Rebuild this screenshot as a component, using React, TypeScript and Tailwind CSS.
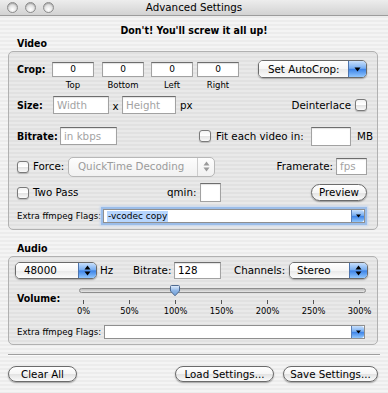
import React from "react";

const BOLD = "font-bold font-['DejaVu_Sans_Condensed','DejaVu_Sans',sans-serif]";

function DownArrow({ color = "#000" }: { color?: string }) {
  return (
    <svg width="7" height="5" viewBox="0 0 7 5">
      <path d="M0.5 0.5 L6.5 0.5 L3.5 4.5 Z" fill={color} />
    </svg>
  );
}

function UpDown({ color = "#000" }: { color?: string }) {
  return (
    <svg width="7" height="11" viewBox="0 0 7 11">
      <path d="M0.5 4.5 L6.5 4.5 L3.5 0.5 Z" fill={color} />
      <path d="M0.5 6.5 L6.5 6.5 L3.5 10.5 Z" fill={color} />
    </svg>
  );
}

function PopUp({ cls, label, stepper, textPad }: { cls: string; label: string; stepper?: boolean; textPad: string }) {
  return (
    <div className={`${cls} flex rounded-[5px] border border-[#6a6a6a] shadow-[0_1px_1.5px_rgba(0,0,0,0.3)] overflow-hidden`}>
      <div className={`flex-1 flex items-center ${textPad} bg-[linear-gradient(180deg,#ffffff_0%,#f6f6f6_50%,#e9e9e9_52%,#fcfcfc_100%)]`}>
        {label}
      </div>
      <div className="w-[18px] flex items-center justify-center border-l border-[#4d74ad] bg-[linear-gradient(180deg,#c9e0fb_0%,#78aef2_45%,#3f85e8_53%,#92c7fd_100%)]">
        {stepper ? <UpDown /> : <DownArrow />}
      </div>
    </div>
  );
}

function Checkbox() {
  return (
    <div className="w-[12px] h-[12px] shrink-0 rounded-[3px] border border-[#7a7a7a] bg-[linear-gradient(180deg,#f2f2f2_0%,#ffffff_45%,#e4e4e4_55%,#fafafa_100%)] shadow-[0_1px_1px_rgba(0,0,0,0.2)]" />
  );
}

function Field({ cls, value, placeholder, center, small }: { cls: string; value?: string; placeholder?: string; center?: boolean; small?: boolean }) {
  return (
    <div
      className={`${cls} shrink-0 bg-white border border-[#a2a2a2] border-t-[#6d6d6d] shadow-[inset_0_1px_1px_rgba(0,0,0,0.12)] flex items-center ${center ? "justify-center" : "pl-[3px]"} ${small ? "text-[9px]" : ""}`}
    >
      {value ? <span>{value}</span> : <span className="text-[#a3a3a3]">{placeholder}</span>}
    </div>
  );
}

function PushButton({ cls, label }: { cls: string; label: string }) {
  return (
    <div className={`${cls} shrink-0 rounded-full border border-[#6b6b6b] flex items-center justify-center bg-[linear-gradient(180deg,#ffffff_0%,#f5f5f5_50%,#e3e3e3_53%,#fafafa_100%)] shadow-[0_1px_1.5px_rgba(0,0,0,0.35)]`}>
      {label}
    </div>
  );
}

function Combo({ focused, value }: { focused?: boolean; value?: string }) {
  return (
    <div className={`flex-1 h-[14px] flex bg-white border border-[#8f8f8f] ${focused ? "shadow-[0_0_0_2px_#9bbde9,0_0_2px_3px_#c3d7f1]" : ""}`}>
      <div className="flex-1 flex items-center pl-[3px]">
        {value ? <span className="bg-[#b6d5fd] px-[1px] text-[9px] leading-[11px]">{value}</span> : null}
      </div>
      <div className="w-[13px] flex items-center justify-center rounded-r-[3px] border-l border-[#5a7fb6] bg-[linear-gradient(180deg,#c9e0fb_0%,#78aef2_45%,#3f85e8_53%,#92c7fd_100%)]">
        <svg width="5" height="4" viewBox="0 0 5 4">
          <path d="M0 0.5 L5 0.5 L2.5 3.5 Z" fill="#000" />
        </svg>
      </div>
    </div>
  );
}

function Light() {
  return (
    <div className="w-[11px] h-[11px] rounded-full border border-[#8c8c8c] bg-[radial-gradient(circle_at_50%_70%,#ffffff_0%,#e6e6e6_45%,#bdbdbd_100%)] shadow-[inset_0_1px_1px_rgba(0,0,0,0.2)]" />
  );
}

const ticks = ["0%", "50%", "100%", "150%", "200%", "250%", "300%"];

export default function App() {
  return (
    <div className="w-[388px] h-[393px] overflow-hidden flex flex-col bg-[repeating-linear-gradient(180deg,#ececec_0px,#ececec_2px,#f4f4f4_2px,#f4f4f4_4px)] font-['DejaVu_Sans',sans-serif] text-[10.3px] leading-none text-black">
      {/* title bar */}
      <div className="h-[16px] shrink-0 relative flex items-center justify-center border-b border-[#9c9c9c] bg-[linear-gradient(180deg,#ededed_0%,#dddddd_60%,#d2d2d2_100%)]">
        <div className="absolute left-[7px] top-[2px] flex gap-[7px]">
          <Light />
          <Light />
          <Light />
        </div>
        <span>Advanced Settings</span>
      </div>

      <div className={`mt-[8px] h-[13px] leading-[13px] text-center ${BOLD} text-[10.5px]`}>
        Don't! You'll screw it all up!
      </div>
      <div className={`ml-[17px] h-[13px] leading-[13px] ${BOLD} text-[10.5px]`}>Video</div>

      {/* Video box */}
      <div className="ml-[8px] mt-[1px] w-[370px] h-[179px] shrink-0 rounded-[5px] border border-[#b1b1b1] bg-black/[0.045] flex flex-col">
        {/* crop row */}
        <div className="mt-[8px] h-[28px] flex items-start pl-[8px]">
          <div className={`w-[35px] h-[15px] mt-[2px] flex items-center ${BOLD} text-[10.5px]`}>Crop:</div>
          {[
            ["Top", ""],
            ["Bottom", "ml-[8px]"],
            ["Left", "ml-[7px]"],
            ["Right", "ml-[4px]"],
          ].map(([l, m]) => (
            <div key={l} className={`${m} w-[42px] mt-[2px] flex flex-col items-center`}>
              <Field cls="w-[42px] h-[15px]" value="0" center small />
              <div className="mt-[4px] text-[8.5px]">{l}</div>
            </div>
          ))}
          <div className="ml-auto mr-[10px]">
            <PopUp cls="w-[109px] h-[18px]" label="Set AutoCrop:" textPad="pl-[9px]" />
          </div>
        </div>

        {/* size row */}
        <div className="mt-[8px] h-[18px] flex items-center pl-[8px]">
          <div className={`w-[36px] ${BOLD} text-[10.5px]`}>Size:</div>
          <Field cls="w-[56px] h-[18px]" placeholder="Width" />
          <div className="w-[13px] text-center pt-[2px]">x</div>
          <Field cls="w-[54px] h-[18px]" placeholder="Height" />
          <div className="ml-[4px]">px</div>
          <div className="ml-auto">Deinterlace</div>
          <div className="ml-[4px] mr-[10px]">
            <Checkbox />
          </div>
        </div>

        {/* bitrate row */}
        <div className="mt-[13px] h-[18px] flex items-center pl-[8px]">
          <div className={`w-[43px] ${BOLD} text-[10.5px]`}>Bitrate:</div>
          <Field cls="w-[57px] h-[18px]" placeholder="in kbps" />
          <div className="ml-[82px]">
            <Checkbox />
          </div>
          <div className="ml-[5px]">Fit each video in:</div>
          <div className="ml-auto flex items-center">
            <Field cls="w-[40px] h-[19px]" />
            <div className="w-[26px] pl-[6px]">MB</div>
          </div>
        </div>

        {/* force row */}
        <div className="mt-[11px] h-[21px] flex items-center pl-[8px]">
          <Checkbox />
          <div className="ml-[4px] w-[35px]">Force:</div>
          <div className="w-[147px] h-[20px] flex rounded-[5px] border border-[#b7b7b7] bg-[linear-gradient(180deg,#fdfdfd,#f1f1f1)] text-[#9b9b9b] overflow-hidden">
            <div className="flex-1 flex items-center pl-[9px]">QuickTime Decoding</div>
            <div className="w-[17px] flex items-center justify-center border-l border-[#cdcdcd]">
              <UpDown color="#9a9a9a" />
            </div>
          </div>
          <div className="ml-auto">Framerate:</div>
          <div className="ml-[3px] mr-[10px]">
            <Field cls="w-[31px] h-[17px]" placeholder="fps" />
          </div>
        </div>

        {/* two pass row */}
        <div className="mt-[6px] h-[19px] flex items-center pl-[8px]">
          <Checkbox />
          <div className="ml-[4px] w-[134px]">Two Pass</div>
          <div className="w-[33px]">qmin:</div>
          <Field cls="w-[21px] h-[19px]" />
          <div className="ml-auto mr-[10px]">
            <PushButton cls="w-[56px] h-[17px]" label="Preview" />
          </div>
        </div>

        {/* flags row */}
        <div className="mt-[7px] h-[14px] flex items-center pl-[8px] pr-[12px]">
          <div className="w-[86px] text-[8.6px]">Extra ffmpeg Flags:</div>
          <Combo focused value="-vcodec copy" />
        </div>
      </div>

      <div className={`ml-[17px] mt-[12px] h-[13px] leading-[13px] ${BOLD} text-[10.5px]`}>Audio</div>

      {/* Audio box */}
      <div className="ml-[8px] mt-[1px] w-[370px] h-[89px] shrink-0 rounded-[5px] border border-[#b1b1b1] bg-black/[0.045] flex flex-col">
        <div className="mt-[5px] h-[17px] flex items-center pl-[6px]">
          <PopUp cls="w-[82px] h-[17px]" label="48000" stepper textPad="pl-[8px]" />
          <div className="ml-[3px] w-[33px]">Hz</div>
          <div className="w-[41px]">Bitrate:</div>
          <Field cls="w-[47px] h-[17px]" value="128" />
          <div className="ml-[13px] w-[55px]">Channels:</div>
          <PopUp cls="w-[79px] h-[17px]" label="Stereo" stepper textPad="pl-[7px]" />
        </div>

        {/* volume */}
        <div className="mt-[3px] h-[36px] flex pl-[8px]">
          <div className={`w-[62px] pt-[11px] ${BOLD} text-[10.5px]`}>Volume:</div>
          <div className="relative w-[287px] flex flex-col">
            <div className="mt-[6px] h-[5px] rounded-full border border-[#8d8d8d] bg-[linear-gradient(180deg,#b9b9b9,#e8e8e8)]" />
            <div className="ml-[4px] w-[277px] mt-[7px] flex justify-between">
              {ticks.map((t) => (
                <div key={t} className="w-[1px] flex flex-col items-center">
                  <div className="w-[1px] h-[4px] bg-[#555]" />
                  <div className="mt-[3px] text-[8.3px] whitespace-nowrap">{t}</div>
                </div>
              ))}
            </div>
            <svg className="absolute left-[90px] top-[3px]" width="12" height="12" viewBox="0 0 12 12">
              <defs>
                <linearGradient id="kn" x1="0" y1="0" x2="0" y2="1">
                  <stop offset="0" stopColor="#e6f0fc" />
                  <stop offset="0.5" stopColor="#8fb6e6" />
                  <stop offset="1" stopColor="#6d9cd6" />
                </linearGradient>
              </defs>
              <path d="M1.5 1.5 Q1.5 0.5 2.5 0.5 L9.5 0.5 Q10.5 0.5 10.5 1.5 L10.5 6 L6 10.8 L1.5 6 Z" fill="url(#kn)" stroke="#4f6b91" strokeWidth="1" />
            </svg>
          </div>
        </div>

        <div className="mt-[7px] h-[14px] flex items-center pl-[8px] pr-[12px]">
          <div className="w-[87px] text-[8.6px]">Extra ffmpeg Flags:</div>
          <Combo />
        </div>
      </div>

      <div className="mx-[8px] mt-[9px] h-[2px] border-t border-[#9f9f9f] border-b border-b-white/70" />

      <div className="mt-[10px] h-[16px] flex">
        <PushButton cls="ml-[8px] w-[69px] h-[16px]" label="Clear All" />
        <PushButton cls="ml-[98px] w-[99px] h-[16px]" label="Load Settings..." />
        <PushButton cls="ml-[9px] w-[95px] h-[16px]" label="Save Settings..." />
      </div>
    </div>
  );
}
